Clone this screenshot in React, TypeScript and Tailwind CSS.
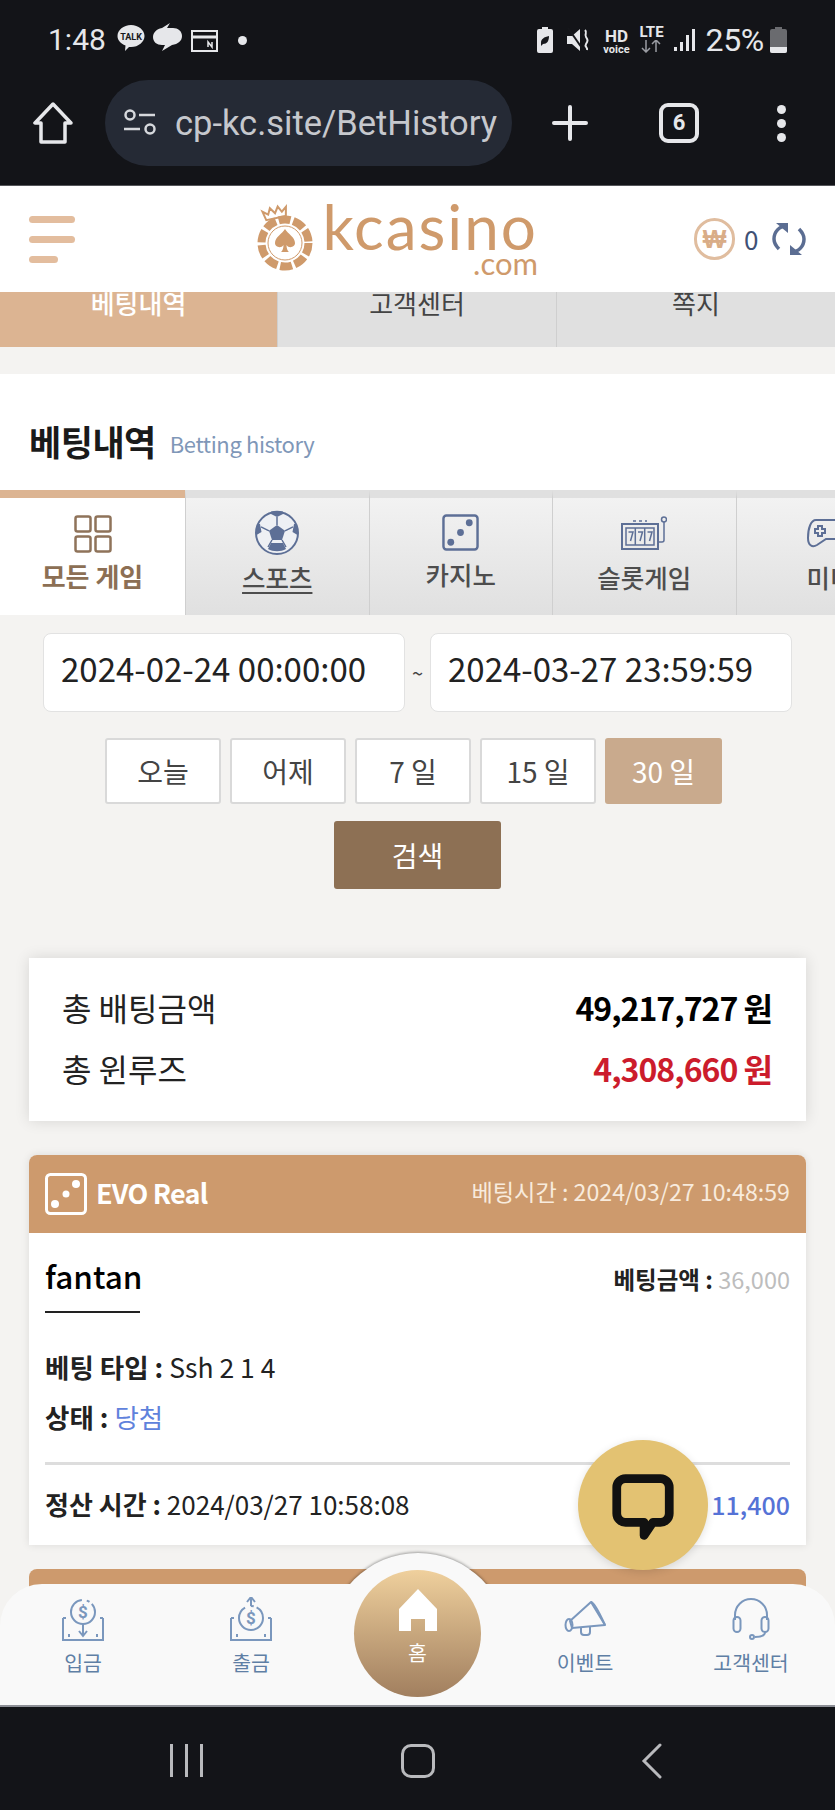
// App.tsx - kcasino betting history, seen in a mobile browser
const tabs = ['스포츠', '카지노', '슬롯게임', '미니게임']
const quickRanges = ['오늘', '어제', '7 일', '15 일']

function StatusBar() {
  return (
    <div className="flex h-[80px] items-start pt-[25px] pl-[48px] pr-[48px] text-[#e6e7ea] font-['Roboto',sans-serif]">
      <span className="text-[30px] leading-[30px] w-[69px]">1:48</span>
      <svg width="28" height="28" viewBox="0 0 28 28" className="-mt-[1px]">
        <path d="M14 1c7.500 0 13.500 5 13.500 11S21.500 23 14 23l-2 .0-4 4 .5-5.500C3.500 19.500.5 16 .5 12 .5 6 6.500 1 14 1z" fill="#e6e7ea" />
        <text x="14" y="15.500" textAnchor="middle" fontSize="9" fontWeight="700" fill="#16171b" fontFamily="Roboto">TALK</text>
      </svg>
      <svg width="30" height="28" viewBox="0 0 30 28" className="ml-[8px] -mt-[2px]">
        <path d="M17 0 9 5C3 6 0 10 0 14c0 5 4 8 9 8l3 0-3 6 10-6c6-1 10-4 10-9s-4-8-9-8l-6 0z" fill="#e6e7ea" />
      </svg>
      <svg width="27" height="22" viewBox="0 0 27 22" className="ml-[8px] mt-[5px]" fill="none" stroke="#e6e7ea" strokeWidth="2">
        <rect x="1" y="1" width="25" height="20" />
        <path d="M1 7h25" strokeWidth="3" />
        <path d="M17 17v-5l4 5v-5" strokeWidth="1.500" />
      </svg>
      <span className="ml-[20px] mt-[11px] h-[9px] w-[9px] rounded-full bg-[#e6e7ea]" />
      <svg width="18" height="26" viewBox="0 0 18 26" className="ml-auto mt-[2px]">
        <path d="M6 0h6v2h3a2 2 0 0 1 2 2v20a2 2 0 0 1-2 2H3a2 2 0 0 1-2-2V4a2 2 0 0 1 2-2h3z" fill="#e6e7ea" />
        <path d="M5 16c0-4 3-6 8-7 0 5-2 8-6 8l-2 2z" fill="#16171b" />
      </svg>
      <svg width="25" height="26" viewBox="0 0 25 26" className="ml-[13px] mt-[2px]" fill="#e6e7ea">
        <path d="M0 9h5l8-7v22l-8-7H0z" />
        <path d="M1 1l16 23" stroke="#16171b" strokeWidth="2" />
        <path d="M18 3c3 3-1 4 1 7s2 4 0 7 2 3 1 6" fill="none" stroke="#e6e7ea" strokeWidth="2" />
      </svg>
      <div className="ml-[11px] mt-[4px] flex w-[26px] flex-col items-center font-bold leading-none">
        <span className="text-[17px] leading-[15px]">HD</span>
        <span className="text-[11px] leading-[11px]">voice</span>
      </div>
      <div className="ml-[9px] flex w-[26px] flex-col items-center">
        <span className="text-[15px] leading-[15px] font-bold">LTE</span>
        <svg width="22" height="13" viewBox="0 0 22 13" fill="none" stroke="#9a9ca2" strokeWidth="1.500">
          <path d="M6 0v12M2 8l4 4 4-4M16 12V0M12 4l4-4 4 4" />
        </svg>
      </div>
      <svg width="22" height="24" viewBox="0 0 22 24" className="ml-[10px] mt-[3px]" fill="#e6e7ea">
        <rect x="0" y="19" width="3" height="4" />
        <rect x="6" y="14" width="3" height="9" />
        <rect x="12" y="7" width="3" height="16" />
        <rect x="18" y="1" width="3" height="22" />
      </svg>
      <span className="ml-[9px] text-[32px] leading-[30px] tracking-[-0.3px]">25%</span>
      <svg width="17" height="26" viewBox="0 0 17 26" className="ml-[6px] mt-[2px]">
        <path d="M5 0h7v2h3a2 2 0 0 1 2 2v20a2 2 0 0 1-2 2H2a2 2 0 0 1-2-2V4a2 2 0 0 1 2-2h3z" fill="#6a6b6f" />
        <path d="M0 20h17v4a2 2 0 0 1-2 2H2a2 2 0 0 1-2-2z" fill="#e6e7ea" />
      </svg>
    </div>
  )
}

function BrowserBar() {
  return (
    <div className="flex h-[105px] items-start font-['Roboto',sans-serif]">
      <svg width="40" height="42" viewBox="0 0 40 42" fill="none" stroke="#e6e7ea" strokeWidth="3.500" strokeLinejoin="round" className="ml-[33px] mt-[22px]">
        <path d="M20 2 2 21h6v19h24V21h6z" />
      </svg>
      <div className="ml-[32px] flex h-[86px] w-[407px] items-center overflow-hidden rounded-[43px] bg-[#252a35] pl-[19px]">
        <svg width="32" height="26" viewBox="0 0 32 26" fill="none" stroke="#d6d8dc" strokeWidth="2.500" className="-mt-[2px] shrink-0">
          <circle cx="6" cy="6" r="4.500" />
          <path d="M15 6h16M0 20h16" />
          <circle cx="26" cy="20" r="4.500" />
        </svg>
        <div className="ml-[19px] w-[322px] shrink-0 overflow-hidden whitespace-nowrap text-[34.5px] leading-[42px] text-[#c6c8cd]">cp-kc.site/BetHistory</div>
      </div>
      <svg width="36" height="36" viewBox="0 0 36 36" stroke="#e6e7ea" strokeWidth="4" strokeLinecap="round" className="ml-[40px] mt-[25px]">
        <path d="M18 2v32M2 18h32" />
      </svg>
      <div className="ml-[71px] mt-[23px] flex h-[40px] w-[40px] items-center justify-center rounded-[9px] border-[4px] border-[#e6e7ea] text-[22px] font-bold leading-none text-[#e6e7ea]">6</div>
      <div className="ml-[78px] mt-[25px] flex flex-col gap-[5px]">
        <span className="h-[9px] w-[9px] rounded-full bg-[#e6e7ea]" />
        <span className="h-[9px] w-[9px] rounded-full bg-[#e6e7ea]" />
        <span className="h-[9px] w-[9px] rounded-full bg-[#e6e7ea]" />
      </div>
    </div>
  )
}

function ChipLogo() {
  return (
    <svg width="58" height="68" viewBox="0 0 58 68" className="shrink-0">
      <g transform="rotate(-12 20 9)" fill="none" stroke="#cf9a6b" strokeWidth="2">
        <path d="M9 14 7 5l5 4 3-6 4 6 4-6 3 6 5-4-2 9z" />
      </g>
      <circle cx="29" cy="39" r="23.500" fill="none" stroke="#cf9a6b" strokeWidth="8" strokeDasharray="12 2.800" />
      <circle cx="29" cy="39" r="17" fill="#fff" stroke="#cf9a6b" strokeWidth="1" />
      <path d="M29 25c3 5 10 8 10 14 0 4-6 6-8.500 2 0 3 1 6 2.500 7h-8c1.500-1 2.500-4 2.500-7-2.500 4-8.500 2-8.500-2 0-6 7-9 10-14z" fill="#cf9a6b" />
    </svg>
  )
}

function SiteHeader() {
  return (
    <header className="relative z-10 flex h-[106px] items-center bg-white pl-[29px] pr-[29px]">
      <div className="flex flex-col gap-[13px]">
        <span className="h-[7px] w-[46px] rounded-full bg-[#e3bd9e]" />
        <span className="h-[7px] w-[46px] rounded-full bg-[#e3bd9e]" />
        <span className="h-[7px] w-[29px] rounded-full bg-[#e3bd9e]" />
      </div>
      <div className="ml-[181px] flex items-start">
        <ChipLogo />
        <div className="ml-[12px] flex w-[212px] flex-col items-end text-[#cf9a6b] font-['Lato',sans-serif]">
          <span className="-mt-[3px] text-[62px] leading-[50px] tracking-[2px] font-normal">kcasino</span>
          <span className="text-[31px] leading-[24px]">.com</span>
        </div>
      </div>
      <div className="ml-auto flex items-center">
        <div className="flex h-[42px] w-[41px] items-center justify-center rounded-full border-[3px] border-[#e0bd9f] text-[25px] font-bold leading-none text-[#d9ad88] font-['Liberation_Sans',sans-serif]">₩</div>
        <span className="ml-[9px] w-[14px] text-[26px] leading-none text-[#3f5175] font-['Noto_Sans_CJK_KR',sans-serif]">0</span>
        <svg width="34" height="36" viewBox="0 0 34 36" fill="none" stroke="#5b6d92" strokeWidth="3.500" className="ml-[14px]">
          <path d="M15 5C7 5 2 11 2 18c0 4 2 7 5 10" />
          <path d="M4 3h12v10z" fill="#5b6d92" stroke="none" transform="translate(0 -1)" />
          <path d="M19 31c8 0 13-6 13-13 0-4-2-7-5-10" />
          <path d="M30 33H18V23z" fill="#5b6d92" stroke="none" transform="translate(0 1)" />
        </svg>
      </div>
    </header>
  )
}

function SubMenu() {
  return (
    <div className="grid h-[55px] grid-cols-[277px_279px_279px] overflow-hidden bg-[#e0e0e0] text-center text-[26px] leading-[22px]">
      <div className="bg-[#dcb492] font-medium text-white">베팅내역</div>
      <div className="border-l border-[#cfcfcf] text-[#444]">고객센터</div>
      <div className="border-l border-[#cfcfcf] text-[#444]">쪽지</div>
    </div>
  )
}

function GameIcon({ index }: { index: number }) {
  if (index === 0) {
    return (
      <svg width="72" height="72" viewBox="0 0 72 72" className="shrink-0">
        <circle cx="36" cy="36" r="21" fill="#eef0f4" stroke="#5d6f96" strokeWidth="2" />
        <path d="M36 28l8 5.800-3 9.200H31l-3-9.200z" fill="#5d6f96" />
        <path d="M29 16.500 36 20l7-3.500-1-2c-4-1-8-1-12 0zM53 27l-1.500 8 5 3c.5-4 0-8-1.500-11zM19 27l1.500 8-5 3c-.5-4 0-8 1.500-11zM27 52l3-6h12l3 6c-5 3-13 3-18 0z" fill="#5d6f96" />
        <path d="M36 20v8M44 33.800l8-4M28 33.800l-8-4M41 43l4 7M31 43l-4 7" stroke="#5d6f96" strokeWidth="1.500" />
      </svg>
    )
  }
  if (index === 1) {
    return (
      <svg width="37" height="37" viewBox="0 0 38 38">
        <rect x="1.500" y="1.500" width="35" height="35" rx="3" fill="none" stroke="#5d6f96" strokeWidth="2.500" />
        <circle cx="28" cy="9" r="3.500" fill="#5d6f96" />
        <circle cx="19" cy="19" r="3.500" fill="#5d6f96" />
        <circle cx="9" cy="29" r="3.500" fill="#5d6f96" />
      </svg>
    )
  }
  if (index === 2) {
    return (
      <svg width="46" height="34" viewBox="0 0 46 34" fill="none" stroke="#5d6f96" strokeWidth="1.500">
        <rect x="1" y="8" width="36" height="25" strokeWidth="2" />
        <path d="M5 12h28v17H5zM14.300 12v17M23.700 12v17" />
        <path d="M7.500 16h4.500l-2.500 9M17 16h4.500l-2.500 9M26.500 16H31l-2.500 9" />
        <path d="M37 26h4a2 2 0 0 0 2-2V6" />
        <circle cx="43" cy="3.500" r="2.500" />
        <path d="M12 5h14" strokeDasharray="3 3" />
      </svg>
    )
  }
  return (
    <svg width="60" height="30" viewBox="0 0 60 30" fill="none" stroke="#5d6f96" strokeWidth="2" className="shrink-0">
      <path d="M9 2h42c5 0 8 8 8 18 0 7-4 10-9 7l-9-6H19l-9 6c-5 3-9 0-9-7C1 10 4 2 9 2z" />
      <path d="M11 8v3H8v4h3v3h4v-3h3v-4h-3V8z" />
      <circle cx="44" cy="10" r="1.500" />
      <circle cx="44" cy="17" r="1.500" />
    </svg>
  )
}

function GameTabs() {
  return (
    <div className="flex h-[125px] overflow-hidden">
      <div className="flex w-[185px] shrink-0 flex-col items-center border-t-[8px] border-[#dcb492] bg-white">
        <svg width="38" height="38" viewBox="0 0 38 38" fill="none" stroke="#8f735a" strokeWidth="2.500" className="mt-[17px]">
          <rect x="1.500" y="1.500" width="15" height="15" rx="2" />
          <rect x="21.500" y="1.500" width="15" height="15" rx="2" />
          <rect x="1.500" y="21.500" width="15" height="15" rx="2" />
          <rect x="21.500" y="21.500" width="15" height="15" rx="2" />
        </svg>
        <span className="mt-[6px] text-[26px] font-bold leading-[34px] text-[#8c6f54]">모든 게임</span>
      </div>
      {tabs.map((label, i) => (
        <div
          key={label}
          className={`flex w-[183.5px] shrink-0 flex-col border-t-[8px] border-l border-t-[#e0e0e0] border-l-[#cfcfcf] bg-gradient-to-b from-[#f2f2f2] to-[#e0e0e0] ${i === 3 ? 'items-start pl-[70px]' : 'items-center'}`}
        >
          <div className={`flex h-[54px] items-center pt-[15px] ${i === 3 ? '' : 'w-full justify-center'}`}>
            <GameIcon index={i} />
          </div>
          <span className={`text-[25.5px] font-medium whitespace-nowrap leading-[34px] text-[#4d4d4d] ${i === 1 ? 'mt-[5px]' : 'mt-[8px]'} ${i === 0 ? 'underline underline-offset-[4px]' : ''}`}>{label}</span>
        </div>
      ))}
    </div>
  )
}

function Filters() {
  return (
    <div className="pt-[18px]">
      <div className="flex items-center pl-[43px]">
        <div className="flex h-[79px] w-[362px] items-center rounded-[8px] border border-[#e2e2e2] bg-white pl-[17px] pb-[8px] text-[33px] text-[#222]">2024-02-24 00:00:00</div>
        <span className="w-[25px] text-center text-[20px] text-[#444]">~</span>
        <div className="flex h-[79px] w-[362px] items-center rounded-[8px] border border-[#e2e2e2] bg-white pl-[17px] pb-[8px] text-[33px] text-[#222]">2024-03-27 23:59:59</div>
      </div>
      <div className="mt-[26px] flex gap-[9px] pl-[105px]">
        {quickRanges.map(label => (
          <div key={label} className="flex h-[66px] w-[116px] items-center justify-center rounded-[3px] border-2 border-[#d9d9d9] bg-white text-[28px] text-[#444]">{label}</div>
        ))}
        <div className="flex h-[66px] w-[117px] items-center justify-center rounded-[3px] bg-[#c9aa8d] text-[28px] text-white">30 일</div>
      </div>
      <div className="mt-[17px] flex justify-center">
        <div className="flex h-[68px] w-[167px] items-center justify-center rounded-[3px] bg-[#8d7054] text-[28px] text-white">검색</div>
      </div>
    </div>
  )
}

function Summary() {
  return (
    <div className="mx-[29px] mt-[69px] h-[163px] bg-white pl-[33px] pr-[34px] pt-[27px] shadow-[0_0_14px_rgba(0,0,0,0.12)]">
      <div className="flex h-[44px] items-center justify-between text-[32px] text-[#222]">
        <span>총 배팅금액</span>
        <span className="font-bold tracking-[-1px] text-black">49,217,727 원</span>
      </div>
      <div className="mt-[17px] flex h-[44px] items-center justify-between text-[32px] text-[#222]">
        <span>총 윈루즈</span>
        <span className="font-bold tracking-[-1px] text-[#cc1c2c]">4,308,660 원</span>
      </div>
    </div>
  )
}

function BetCard() {
  return (
    <div className="mx-[29px] mt-[34px] h-[390px] rounded-t-[8px] bg-white shadow-[0_0_8px_rgba(0,0,0,0.1)]">
      <div className="flex h-[78px] items-center rounded-t-[8px] bg-[#cd9a6d] pl-[16px] pr-[16px]">
        <svg width="42" height="42" viewBox="0 0 42 42" className="shrink-0">
          <rect x="1.500" y="1.500" width="39" height="39" rx="4" fill="none" stroke="#fff" strokeWidth="3" />
          <circle cx="31" cy="11" r="4" fill="#fff" />
          <circle cx="21" cy="21" r="3.500" fill="#fff" />
          <circle cx="10" cy="31" r="4" fill="#fff" />
        </svg>
        <span className="ml-[9px] -mt-[4px] text-[27px] font-bold leading-none tracking-[-0.8px] text-white">EVO Real</span>
        <span className="ml-auto -mt-[4px] text-[23.2px] leading-none text-[#f8ebdd]">베팅시간 : 2024/03/27 10:48:59</span>
      </div>
      <div className="px-[16px]">
        <div className="flex items-start justify-between pt-[19px]">
          <div className="w-[95px] border-b-2 border-[#222] pb-[13px] text-[31.5px] font-medium leading-[46px] text-black">fantan</div>
          <div className="mt-[12px] text-[23.5px] leading-[30px]">
            <span className="font-bold text-[#222]">베팅금액 : </span>
            <span className="text-[#bdbdbd]">36,000</span>
          </div>
        </div>
        <div className="mt-[36px] h-[36px] text-[26.5px] leading-[36px] text-[#222]">
          <span className="font-bold">베팅 타입 : </span>Ssh 2 1 4
        </div>
        <div className="mt-[14px] h-[36px] text-[26.5px] leading-[36px] text-[#222]">
          <span className="font-bold">상태 : </span><span className="text-[#5f82dc]">당첨</span>
        </div>
        <div className="mt-[27px] flex items-center justify-between border-t-[3px] border-[#dddddd] pt-[21px] text-[26px] leading-[36px] text-[#222]">
          <span><span className="font-bold">정산 시간 : </span>2024/03/27 10:58:08</span>
          <span className="text-[25px] font-medium text-[#5572d6]">11,400</span>
        </div>
      </div>
    </div>
  )
}

function NavItem({ label, children, left }: { label: string; children: React.ReactNode; left: string }) {
  return (
    <div className={`absolute top-[12px] flex w-[100px] flex-col items-center ${left}`}>
      <div className="flex h-[46px] items-center justify-center">{children}</div>
      <span className="mt-[6px] text-[20.5px] leading-[28px] text-[#5f7fa5]">{label}</span>
    </div>
  )
}

function MoneyIcon({ up }: { up: boolean }) {
  return (
    <svg width="44" height="44" viewBox="0 0 44 44" fill="none" stroke="#7a97bd" strokeWidth="2">
      <path d="M2 21v22h40V21M2 21h3M42 21h-3M8 37l0 3M36 37v3" />
      <circle cx="22" cy={up ? 21 : 15} r="12" strokeDasharray={up ? '50 6 3 3' : '55 5 3 3'} />
      {up ? <path d="M22 9V1M18 5l4-5 4 5" /> : <path d="M22 27v11M18 34l4 5 4-5" />}
      <text x="22" y={up ? 27 : 21} textAnchor="middle" fontSize="17" fontWeight="700" fill="#7a97bd" stroke="none" fontFamily="Roboto">$</text>
    </svg>
  )
}

function BottomNav() {
  return (
    <div className="absolute inset-x-0 bottom-0 z-20 h-[257px]">
      <div className="absolute left-[328px] top-0 h-[180px] w-[180px] rounded-full bg-[#f9f9f9] shadow-[0_-1px_3px_rgba(0,0,0,0.35)]" />
      <div className="absolute inset-x-0 top-[31px] h-[123px] rounded-t-[42px] border-b-2 border-[#8d8f96] bg-[#f9f9f9]">
        <NavItem label="입금" left="left-[33px]"><MoneyIcon up={false} /></NavItem>
        <NavItem label="출금" left="left-[201px]"><MoneyIcon up={true} /></NavItem>
        <NavItem label="이벤트" left="left-[535px]">
          <svg width="42" height="36" viewBox="0 0 42 36" fill="none" stroke="#7a97bd" strokeWidth="2" strokeLinejoin="round">
            <path d="M27 1 6 20l2 7 33-3z" />
            <path d="M27 1c3 0 9 12 14 23" />
            <ellipse cx="5" cy="24" rx="3.500" ry="6" />
            <path d="M17 27v4a3 3 0 0 0 3 3h3a3 3 0 0 0 3-3v-5" />
          </svg>
        </NavItem>
        <NavItem label="고객센터" left="left-[701px]">
          <svg width="38" height="42" viewBox="0 0 38 42" fill="none" stroke="#7a97bd" strokeWidth="2">
            <path d="M3 22v-5a16 16 0 0 1 32 0v5" />
            <rect x="1.500" y="19" width="7" height="15" rx="3.500" />
            <rect x="29.500" y="19" width="7" height="15" rx="3.500" />
            <path d="M33 34c0 4-4 5-10 5" />
            <circle cx="20" cy="39" r="2" />
          </svg>
        </NavItem>
      </div>
      <div className="absolute left-[354px] top-[17px] flex h-[127px] w-[127px] flex-col items-center rounded-full bg-gradient-to-b from-[#efd09d] to-[#a17f5f] pt-[19px]">
        <svg width="38" height="42" viewBox="0 0 38 42" fill="#fff">
          <path d="M19 0 38 20v22H26V30H12v12H0V20z" />
        </svg>
        <span className="mt-[7px] text-[20.5px] leading-[28px] text-white">홈</span>
      </div>
      <div className="absolute inset-x-0 bottom-0 flex h-[103px] items-start bg-[#131418]">
        <div className="ml-[170px] mt-[37px] flex gap-[12px]">
          <span className="h-[33px] w-[3px] bg-[#b9babd]" />
          <span className="h-[33px] w-[3px] bg-[#b9babd]" />
          <span className="h-[33px] w-[3px] bg-[#b9babd]" />
        </div>
        <span className="ml-[198px] mt-[37px] h-[34px] w-[34px] rounded-[10px] border-[3px] border-[#b9babd]" />
        <svg width="22" height="36" viewBox="0 0 22 36" fill="none" stroke="#b9babd" strokeWidth="3" strokeLinecap="round" className="ml-[206px] mt-[36px]">
          <path d="M19 2 3 18l16 16" />
        </svg>
      </div>
    </div>
  )
}

export default function App() {
  return (
    <div className="relative h-[1810px] w-[835px] overflow-hidden bg-[#f4f3f1] font-['Noto_Sans_CJK_KR',sans-serif]">
      <div className="h-[186px] border-b border-[#55565a] bg-[#131418]">
        <StatusBar />
        <BrowserBar />
      </div>
      <SiteHeader />
      <SubMenu />
      <div className="mt-[27px] flex h-[116px] items-center bg-white pl-[29px] pt-[16px]">
        <span className="text-[35px] font-bold leading-none tracking-[-0.5px] text-[#1a1a1a]">베팅내역</span>
        <span className="ml-[14px] mt-[6px] text-[22px] leading-none tracking-[-0.4px] text-[#7f97b8]">Betting history</span>
      </div>
      <GameTabs />
      <Filters />
      <Summary />
      <BetCard />
      <div className="mx-[29px] mt-[24px] h-[60px] rounded-t-[8px] bg-[#cd9a6d]" />
      <BottomNav />
      <div className="absolute left-[578px] top-[1440px] z-30 flex h-[130px] w-[130px] items-center justify-center rounded-full bg-[#e3c272] shadow-[0_2px_8px_rgba(0,0,0,0.12)]">
        <svg width="70" height="70" viewBox="0 0 64 64" fill="none" stroke="#111" strokeWidth="8" strokeLinejoin="round" className="mt-[4px]">
          <path d="M16 6h32a8 8 0 0 1 8 8v24a8 8 0 0 1-8 8H41l-8 12v-12H16a8 8 0 0 1-8-8V14a8 8 0 0 1 8-8z" />
        </svg>
      </div>
    </div>
  )
}
